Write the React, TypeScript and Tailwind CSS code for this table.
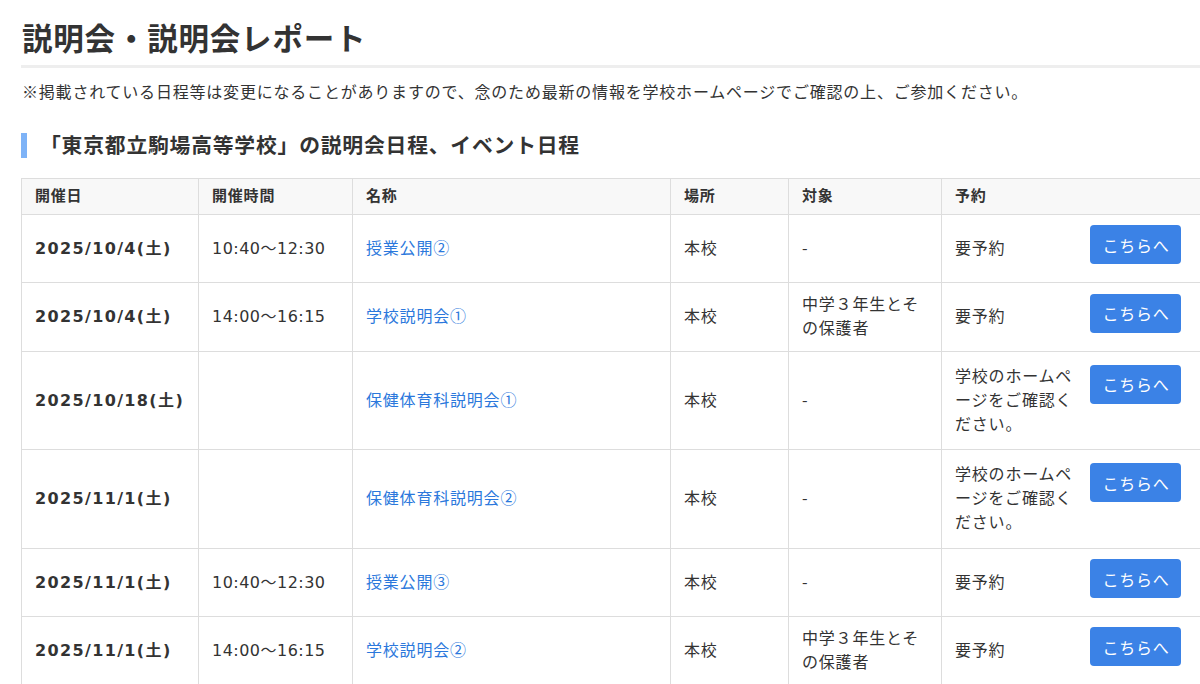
import React from "react";

type Row = {
  date: string;
  time: string;
  name: string;
  place: string;
  target: string;
  reserve: string;
  h: string;
};

const rows: Row[] = [
  { date: "2025/10/4(土)", time: "10:40～12:30", name: "授業公開②", place: "本校", target: "-", reserve: "要予約", h: "h-[68px]" },
  { date: "2025/10/4(土)", time: "14:00～16:15", name: "学校説明会①", place: "本校", target: "中学３年生とその保護者", reserve: "要予約", h: "h-[69px]" },
  { date: "2025/10/18(土)", time: "", name: "保健体育科説明会①", place: "本校", target: "-", reserve: "学校のホームページをご確認ください。", h: "h-[98px]" },
  { date: "2025/11/1(土)", time: "", name: "保健体育科説明会②", place: "本校", target: "-", reserve: "学校のホームページをご確認ください。", h: "h-[99px]" },
  { date: "2025/11/1(土)", time: "10:40～12:30", name: "授業公開③", place: "本校", target: "-", reserve: "要予約", h: "h-[68px]" },
  { date: "2025/11/1(土)", time: "14:00～16:15", name: "学校説明会②", place: "本校", target: "中学３年生とその保護者", reserve: "要予約", h: "h-[68px]" },
];

const headers = ["開催日", "開催時間", "名称", "場所", "対象", "予約"];
const widths = ["w-[177px]", "w-[154px]", "w-[318px]", "w-[118px]", "w-[153px]", "w-[270px]"];

const cell = "border border-[#dddddd] px-[13px] pt-0 pb-[4px]";
// latin figures: DejaVu is closer to the reference's wide digits
const latin = "border border-[#dddddd] px-[13px] py-0 font-['DejaVu_Sans','Noto_Sans_CJK_JP',sans-serif]";

const App = () => {
  return (
    <div className="w-[1200px] h-[684px] overflow-hidden bg-white text-[#333] font-['Noto_Sans_CJK_JP','Noto_Sans',sans-serif] tracking-[0.05em]">
      <div className="pl-[21px]">
        <h1 className="pt-[15px] pb-[5px] pl-px text-[30.5px] leading-[45px] font-bold border-b-[3px] border-[#eeeeee]">
          説明会・説明会レポート
        </h1>
        <p className="mt-[11px] pb-[2px] pl-px text-[16px] leading-[24px]">
          ※掲載されている日程等は変更になることがありますので、念のため最新の情報を学校ホームページでご確認の上、ご参加ください。
        </p>
        <h2 className="mt-[28px] flex items-center gap-[13px]">
          <span className="h-[25px] w-[6px] bg-[#7eb3f7]" />
          <span className="text-[20.8px] leading-[25px] font-bold -translate-y-px">「東京都立駒場高等学校」の説明会日程、イベント日程</span>
        </h2>
        <table className="mt-[20px] w-[1190px] table-fixed border-collapse text-[16px] leading-[24px]">
          <thead>
            <tr className="h-[36px] bg-[#f8f8f8]">
              {headers.map((h, i) => (
                <th key={h} className={`${widths[i]} ${cell} text-left text-[15px] font-bold`}>
                  {h}
                </th>
              ))}
            </tr>
          </thead>
          <tbody>
            {rows.map((r, i) => (
              <tr key={i} className={r.h}>
                <td className={`${latin} font-bold tracking-[0.085em]`}>{r.date}</td>
                <td className={`${latin} tracking-[0.03em]`}>{r.time}</td>
                <td className={`${cell} text-[#2b78dc]`}>{r.name}</td>
                <td className={cell}>{r.place}</td>
                <td className={cell}>{r.target}</td>
                <td className="border border-[#dddddd] pl-[13px] pr-[30px] pt-0 pb-[4px]">
                  <div className="flex items-center">
                    <span className="min-w-0 flex-1">{r.reserve}</span>
                    <button className="ml-[12px] mb-[8px] h-[39px] w-[91px] shrink-0 self-start rounded-[4px] bg-[#3b82e6] pl-px text-[16px] text-white translate-y-[2px]">
                      こちらへ
                    </button>
                  </div>
                </td>
              </tr>
            ))}
          </tbody>
        </table>
      </div>
    </div>
  );
};

export default App;
